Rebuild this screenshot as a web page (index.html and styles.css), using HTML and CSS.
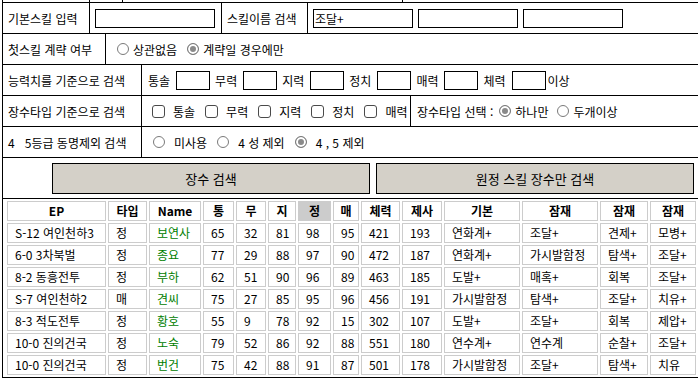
FILE: index.html
```html
<!DOCTYPE html>
<html lang="ko">
<head>
    <meta charset="UTF-8">
    <title>장수 검색</title>
    <link rel="stylesheet" href="styles.css">
</head>
<body>
<div class="frame">
    <div class="cut">
        <div class="cut-a"></div>
        <div class="cut-b"></div>
        <div class="cut-c"></div>
    </div>

    <div class="row">
        <div class="cell w87">기본스킬 입력</div>
        <div class="cell w132"><input class="txt w120" type="text"></div>
        <div class="cell w86">스킬이름 검색</div>
        <div class="cell grow inputs">
            <input class="txt w100" type="text" value="조달+">
            <input class="txt w100" type="text">
            <input class="txt w100" type="text">
        </div>
    </div>

    <div class="row">
        <div class="cell w103">첫스킬 계략 여부</div>
        <div class="cell grow opts first">
            <label><input class="radio" type="radio" name="first">상관없음</label>
            <label><input class="radio" type="radio" name="first" checked>계략일 경우에만</label>
        </div>
    </div>

    <div class="row">
        <div class="cell w139">능력치를 기준으로 검색</div>
        <div class="cell grow stats">
            <span>통솔</span><input class="txt w34" type="text">
            <span>무력</span><input class="txt w34" type="text">
            <span>지력</span><input class="txt w34" type="text">
            <span>정치</span><input class="txt w34" type="text">
            <span>매력</span><input class="txt w34" type="text">
            <span>체력</span><input class="txt w34" type="text"><span class="tail">이상</span>
        </div>
    </div>

    <div class="row">
        <div class="cell w139">장수타입 기준으로 검색</div>
        <div class="cell w269 opts checks">
            <label><input class="check" type="checkbox">통솔</label>
            <label><input class="check" type="checkbox">무력</label>
            <label><input class="check" type="checkbox">지력</label>
            <label><input class="check" type="checkbox">정치</label>
            <label><input class="check" type="checkbox">매력</label>
        </div>
        <div class="cell grow opts kind">
            <span class="kind-label">장수타입 선택 :</span>
            <label><input class="radio" type="radio" name="kind" checked>하나만</label>
            <label><input class="radio" type="radio" name="kind">두개이상</label>
        </div>
    </div>

    <div class="row">
        <div class="cell w139">4&nbsp;&nbsp;&nbsp;5등급 동명제외 검색</div>
        <div class="cell grow opts grade">
            <label><input class="radio" type="radio" name="grade">미사용</label>
            <label><input class="radio" type="radio" name="grade">4 성 제외</label>
            <label><input class="radio" type="radio" name="grade" checked>4 , 5 제외</label>
        </div>
    </div>

    <div class="row buttons">
        <button class="btn">장수 검색</button>
        <button class="btn">원정 스킬 장수만 검색</button>
    </div>

    <div class="result">
        <table class="list">
            <thead>
                <tr>
                    <th class="c-ep">EP</th>
                    <th class="c-type">타입</th>
                    <th class="c-name">Name</th>
                    <th class="c-tong">통</th>
                    <th class="c-mu">무</th>
                    <th class="c-ji">지</th>
                    <th class="c-jung sorted">정</th>
                    <th class="c-mae">매</th>
                    <th class="c-hp">체력</th>
                    <th class="c-je">제사</th>
                    <th class="c-base">기본</th>
                    <th class="c-p1">잠재</th>
                    <th class="c-p2">잠재</th>
                    <th class="c-p3">잠재</th>
                </tr>
            </thead>
            <tbody>
                <tr><td>S-12 여인천하3</td><td>정</td><td class="name">보연사</td><td>65</td><td>32</td><td>81</td><td>98</td><td>95</td><td>421</td><td>193</td><td>연화계+</td><td>조달+</td><td>견제+</td><td>모병+</td></tr>
                <tr><td>6-0 3차북벌</td><td>정</td><td class="name">종요</td><td>77</td><td>29</td><td>88</td><td>97</td><td>90</td><td>472</td><td>187</td><td>연화계+</td><td>가시발함정</td><td>탐색+</td><td>조달+</td></tr>
                <tr><td>8-2 동흥전투</td><td>정</td><td class="name">부하</td><td>62</td><td>51</td><td>90</td><td>96</td><td>89</td><td>463</td><td>185</td><td>도발+</td><td>매혹+</td><td>회복</td><td>조달+</td></tr>
                <tr><td>S-7 여인천하2</td><td>매</td><td class="name">견씨</td><td>75</td><td>27</td><td>85</td><td>95</td><td>96</td><td>456</td><td>191</td><td>가시발함정</td><td>탐색+</td><td>조달+</td><td>치유+</td></tr>
                <tr><td>8-3 적도전투</td><td>정</td><td class="name">황호</td><td>55</td><td>9</td><td>78</td><td>92</td><td>15</td><td>302</td><td>107</td><td>도발+</td><td>조달+</td><td>회복</td><td>제압+</td></tr>
                <tr><td>10-0 진의건국</td><td>정</td><td class="name">노숙</td><td>79</td><td>52</td><td>86</td><td>92</td><td>88</td><td>551</td><td>180</td><td>연수계+</td><td>연수계</td><td>순찰+</td><td>조달+</td></tr>
                <tr><td>10-0 진의건국</td><td>정</td><td class="name">번건</td><td>75</td><td>42</td><td>88</td><td>91</td><td>87</td><td>501</td><td>178</td><td>가시발함정</td><td>조달+</td><td>탐색+</td><td>치유</td></tr>
            </tbody>
        </table>
    </div>
</div>
</body>
</html>
```

FILE: styles.css
```css
html, body {
    overflow: hidden;
}
body {
    margin: 0;
    font-family: "Noto Sans CJK KR", "Noto Sans", sans-serif;
    font-size: 12px;
    color: #000;
    background: #fff;
}
.frame {
    width: 699px;
    margin-left: 2px;
    border-left: 1px solid #000;
    border-right: 1px solid #000;
    border-bottom: 1px solid #000;
    box-sizing: border-box;
}

/* bottom edge of the row above, cut off by the scroll */
.cut {
    display: flex;
    height: 2px;
    border-bottom: 1px solid #000;
}
.cut div {
    border-right: 1px solid #000;
    box-sizing: border-box;
}
.cut-a { width: 87px; }
.cut-b { width: 33px; }
.cut-c { width: 280px; }

.row {
    display: flex;
    height: 31px;
    border-bottom: 1px solid #000;
    box-sizing: border-box;
}
.cell {
    display: flex;
    align-items: center;
    padding-left: 5px;
    border-right: 1px solid #000;
    box-sizing: border-box;
    white-space: nowrap;
}
.cell.grow {
    flex: 1;
    border-right: none;
}
.w86 { width: 86px; }
.w87 { width: 87px; }
.w103 { width: 103px; }
.w132 { width: 132px; }
.w139 { width: 139px; }
.w269 { width: 269px; }

.txt {
    height: 19px;
    margin: 0;
    padding: 0 1px;
    border: 1px solid #000;
    box-sizing: border-box;
    font-family: inherit;
    font-size: 12px;
    outline: none;
}
.w34 { width: 34px; }
.w100 { width: 100px; }
.w120 { width: 120px; }

.inputs {
    gap: 5px;
}

.stats {
    padding-left: 6px;
}
.stats span {
    margin-right: 6px;
}
.stats input {
    margin-right: 5px;
}
.stats .tail {
    margin-left: -3px;
}

.opts label {
    display: flex;
    align-items: center;
}
.radio, .check {
    appearance: none;
    margin: 0;
    background: #fff;
    box-sizing: border-box;
}
.radio {
    width: 12px;
    height: 12px;
    border: 1px solid #7a7a7a;
    border-radius: 50%;
}
.radio:checked {
    background: #8a8a8a;
    box-shadow: inset 0 0 0 2px #fff;
}
.check {
    width: 13px;
    height: 13px;
    border: 1px solid #4a4a4a;
    border-radius: 3px;
}

.first {
    padding-left: 11px;
}
.first .radio {
    margin-right: 4px;
}
.first label + label {
    margin-left: 10px;
}

.checks {
    padding-left: 10px;
}
.checks .check {
    margin-right: 8px;
}
.checks label + label {
    margin-left: 10px;
}

.kind {
    padding-left: 6px;
}
.kind-label {
    margin-right: 6px;
}
.kind .radio {
    margin-right: 4px;
}
.kind label + label {
    margin-left: 9px;
}

.grade {
    padding-left: 11px;
}
.grade .radio {
    margin-right: 9px;
}
.grade label + label {
    margin-left: 10px;
}

.buttons {
    height: 41px;
    align-items: center;
    gap: 6px;
    padding-left: 49px;
}
.btn {
    width: 318px;
    height: 31px;
    margin: 0;
    background: #d4d0c8;
    border: 1px solid #000;
    font-family: inherit;
    font-size: 13px;
    color: #000;
}

.result {
    padding: 0 2px 0 2px;
}
.list {
    width: 693px;
    table-layout: fixed;
    border-spacing: 2px;
}
.list th, .list td {
    height: 20px;
    padding: 0 0 0 7px;
    border: 1px solid #ccc;
    box-sizing: border-box;
    text-align: left;
    white-space: nowrap;
    overflow: hidden;
    font-size: 12px;
    line-height: 18px;
}
.list th {
    padding: 0;
    text-align: center;
    font-weight: bold;
}
.list th.sorted {
    background: #cccccc;
}
.list td.name {
    color: #008000;
}
.c-ep { width: 99px; }
.c-type { width: 39px; }
.c-name { width: 52px; }
.c-tong { width: 31px; }
.c-mu { width: 30px; }
.c-ji { width: 28px; }
.c-jung { width: 33px; }
.c-mae { width: 26px; }
.c-hp { width: 39px; }
.c-je { width: 40px; }
.c-base { width: 76px; }
.c-p1 { width: 76px; }
.c-p2 { width: 48px; }
.c-p3 { width: 46px; }
```
